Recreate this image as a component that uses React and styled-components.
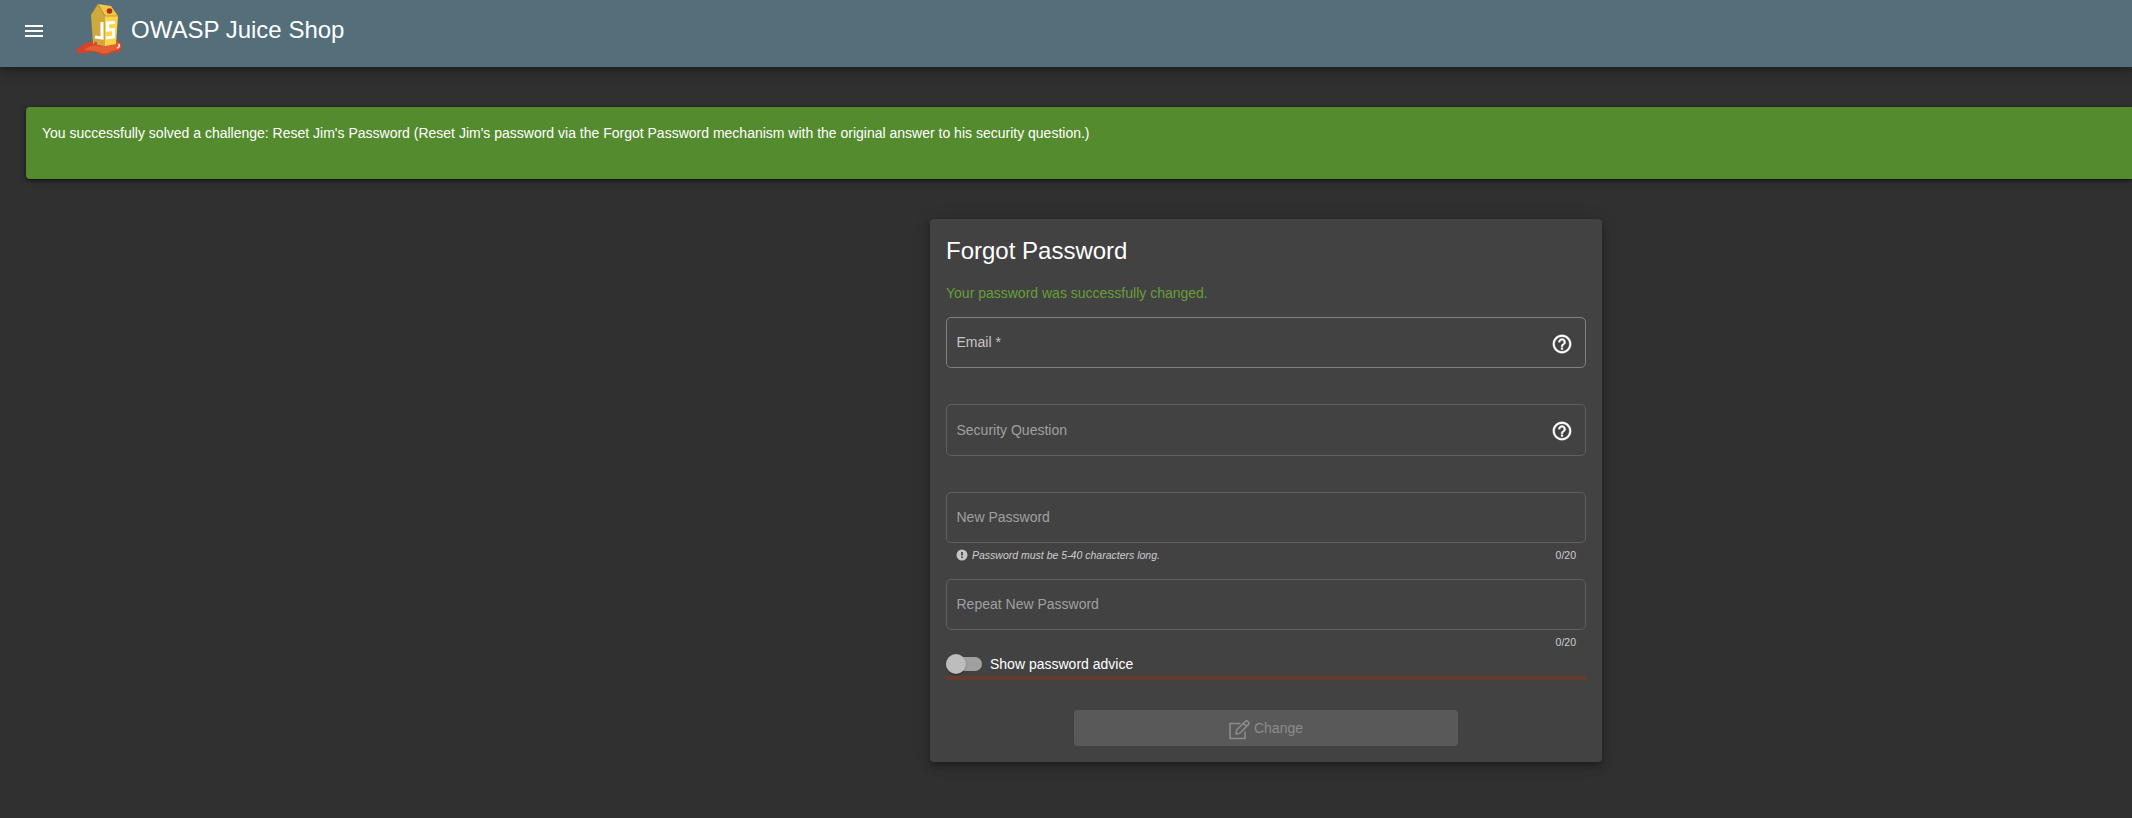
import React from "react";
import styled, { createGlobalStyle } from "styled-components";

const GlobalStyle = createGlobalStyle`
  * { box-sizing: border-box; }
  html { background: #303030; }
  body {
    margin: 0;
    height: 818px;
    overflow: hidden;
    background: #303030;
    color: #fff;
    font-family: "Liberation Sans", Arial, sans-serif;
    font-size: 14px;
  }
`;

const Page = styled.div`
  display: flex;
  flex-direction: column;
  width: 100%;
  height: 818px;
  overflow: hidden;
`;

const Toolbar = styled.header`
  display: flex;
  align-items: flex-start;
  flex: none;
  height: 67px;
  padding-left: 22px;
  background: #546e7a;
  box-shadow: 0 3px 5px -1px rgba(0, 0, 0, 0.2), 0 6px 10px rgba(0, 0, 0, 0.14),
    0 1px 18px rgba(0, 0, 0, 0.12);
`;

const MenuButton = styled.button`
  display: flex;
  margin: 19px 28px 0 0;
  padding: 0;
  border: 0;
  background: none;
  color: #fff;
`;

const Logo = styled.svg`
  display: block;
  flex: none;
  width: 50px;
  height: 56px;
  margin-top: 1px;
`;

const Brand = styled.span`
  margin: 16px 0 0 7px;
  font-size: 24px;
  line-height: 28px;
`;

const Banner = styled.section`
  flex: none;
  height: 72px;
  margin: 40px 0 0 26px;
  padding: 18px 16px;
  border-radius: 4px 0 0 4px;
  background: #558b2f;
  box-shadow: 0 2px 1px -1px rgba(0, 0, 0, 0.2), 0 1px 3px rgba(0, 0, 0, 0.4),
    0 2px 6px rgba(0, 0, 0, 0.3);
  line-height: 16px;
`;

const Card = styled.main`
  display: flex;
  flex-direction: column;
  flex: none;
  width: 672px;
  height: 543px;
  margin: 40px 0 0 930px;
  padding: 16px;
  border-radius: 4px;
  background: #424242;
  box-shadow: 0 3px 5px -1px rgba(0, 0, 0, 0.2), 0 6px 10px rgba(0, 0, 0, 0.14),
    0 1px 18px rgba(0, 0, 0, 0.12);
`;

const Title = styled.h1`
  margin: 2px 0 0;
  font-size: 24px;
  font-weight: 400;
  line-height: 28px;
`;

const Confirmation = styled.p`
  margin: 20px 0 16px;
  color: #689f38;
  line-height: 16px;
`;

const Field = styled.div`
  flex: none;
  height: ${(p) => p.$slot || 87}px;
`;

const Outline = styled.label`
  display: flex;
  align-items: center;
  justify-content: space-between;
  height: ${(p) => p.$height || 51}px;
  padding: 0 12px 0 9.5px;
  border: 1px solid ${(p) => (p.$disabled ? "#5f5f5f" : "#808080")};
  border-radius: 5px;
  color: ${(p) => (p.$disabled ? "#a0a0a0" : "#c6c6c6")};
  line-height: 16px;
`;

const LabelText = styled.span`
  margin-bottom: ${(p) => (p.$low ? 0 : 2)}px;
`;

const HelpIcon = styled.svg`
  display: block;
  width: 22px;
  height: 22px;
  margin-top: 2px;
  fill: #fff;
  stroke: #fff;
  stroke-width: 0.4;
`;

const Subscript = styled.div`
  display: flex;
  align-items: center;
  height: 12px;
  margin-top: 6px;
  padding: 0 10px;
  color: #cecece;
  font-size: 10.5px;
  line-height: 12px;
`;

const Hint = styled.em`
  margin-left: 4px;
`;

const Counter = styled.span`
  margin-left: auto;
`;

const InfoIcon = styled.svg`
  width: 12px;
  height: 12px;
  fill: #c6c6c6;
`;

const ToggleRow = styled.div`
  display: flex;
  align-items: center;
  flex: none;
  height: 20px;
  margin-top: -12px;
`;

const Track = styled.span`
  display: flex;
  align-items: center;
  width: 36px;
  height: 14px;
  margin-right: 8px;
  border-radius: 8px;
  background: #a0a0a0;
`;

const Thumb = styled.span`
  flex: none;
  width: 20px;
  height: 20px;
  border-radius: 50%;
  background: #bdbdbd;
  box-shadow: 0 2px 1px -1px rgba(0, 0, 0, 0.2), 0 1px 1px rgba(0, 0, 0, 0.14),
    0 1px 3px rgba(0, 0, 0, 0.12);
`;

const StrengthBar = styled.div`
  flex: none;
  height: 4px;
  margin-top: 2px;
  background: #673b2c;
`;

const ChangeButton = styled.button`
  display: flex;
  align-items: center;
  justify-content: center;
  gap: 4px;
  width: 384px;
  height: 36px;
  margin: 30px auto 0;
  padding: 0;
  border: 0;
  border-radius: 4px;
  background: #595959;
  color: #8c8c8c;
  font: 14px "Liberation Sans", Arial, sans-serif;
`;

const EditIcon = styled.svg`
  width: 21px;
  height: 20px;
  margin-top: 3px;
`;

const JuiceLogo = () => (
  <Logo viewBox="0 0 50 56">
    <path d="M1 51 C5 46 9 43 15 41 L43 40 C48 41 49 46 46 50 C42 53 38 50 35 53 C31 56 26 53 21 51 C14 50 8 54 1 51Z" fill="#d8412a" />
    <path d="M10 49 C15 45 20 43 27 45 L43 41 C47 42 48 46 45 48 C39 50 37 50 34 52 C29 54 22 49 10 49Z" fill="#e2622f" />
    <path d="M17 14 L24 3 L31 15 L31 45 L19 43Z" fill="#cfa940" />
    <path d="M24 3 L37 5 L44 15 L31 15Z" fill="#f0c843" />
    <path d="M31 15 L44 15 L42 43 L31 45Z" fill="#fbd44c" />
    <path d="M17 14 L24 3 L31 15 M31 15 L44 15" fill="none" stroke="#b58d2c" strokeWidth="0.8" />
    <circle cx="35.5" cy="10" r="2.8" fill="#b52b16" />
    <path d="M28 21 V37 L21 36" fill="none" stroke="#fff" strokeWidth="3.1" />
    <path d="M41 21.500 L33.500 22 V29 L39.500 28.500 V36 L32 37" fill="none" stroke="#fff" strokeWidth="3.1" />
    <path d="M20 42 q2 -3 3 0 v2 h-3Z" fill="#d8472a" />
    <path d="M43 47 q3 -1 2 -4" fill="none" stroke="#ffe7dc" strokeWidth="1.6" />
  </Logo>
);

const Help = () => (
  <HelpIcon viewBox="0 0 24 24">
    <path d="M11 18h2v-2h-2v2zm1-16C6.48 2 2 6.48 2 12s4.48 10 10 10 10-4.48 10-10S17.52 2 12 2zm0 18c-4.41 0-8-3.59-8-8s3.59-8 8-8 8 3.59 8 8-3.59 8-8 8zm0-14c-2.21 0-4 1.79-4 4h2c0-1.1.9-2 2-2s2 .9 2 2c0 2-3 1.75-3 5h2c0-2.25 3-2.5 3-5 0-2.21-1.79-4-4-4z" />
  </HelpIcon>
);

export default function App() {
  return (
    <Page>
      <GlobalStyle />
      <Toolbar>
        <MenuButton aria-label="Open menu">
          <svg width="24" height="24" viewBox="0 0 24 24" fill="#fff">
            <path d="M3 18h18v-2H3v2zm0-5h18v-2H3v2zm0-7v2h18V6H3z" />
          </svg>
        </MenuButton>
        <JuiceLogo />
        <Brand>OWASP Juice Shop</Brand>
      </Toolbar>
      <Banner>
        You successfully solved a challenge: Reset Jim's Password (Reset Jim's password via the
        Forgot Password mechanism with the original answer to his security question.)
      </Banner>
      <Card>
        <Title>Forgot Password</Title>
        <Confirmation>Your password was successfully changed.</Confirmation>
        <Field>
          <Outline>
            <LabelText>Email *</LabelText>
            <Help />
          </Outline>
        </Field>
        <Field $slot={88}>
          <Outline $disabled $height={52}>
            <LabelText $low>Security Question</LabelText>
            <Help />
          </Outline>
        </Field>
        <Field>
          <Outline $disabled>
            <LabelText>New Password</LabelText>
          </Outline>
          <Subscript>
            <InfoIcon viewBox="0 0 24 24">
              <path d="M12 1a11 11 0 1 0 0 22 11 11 0 0 0 0-22zm1.700 17h-3.400v-3h3.400zm0-5h-3.400V6h3.400z" />
            </InfoIcon>
            <Hint>Password must be 5-40 characters long.</Hint>
            <Counter>0/20</Counter>
          </Subscript>
        </Field>
        <Field>
          <Outline $disabled>
            <LabelText>Repeat New Password</LabelText>
          </Outline>
          <Subscript>
            <Counter>0/20</Counter>
          </Subscript>
        </Field>
        <ToggleRow>
          <Track>
            <Thumb />
          </Track>
          Show password advice
        </ToggleRow>
        <StrengthBar />
        <ChangeButton disabled>
          <EditIcon viewBox="0 0 21 20" fill="none" stroke="#8c8c8c" strokeWidth="1.6" strokeLinejoin="round">
            <path d="M11.500 3.500H1v15h15v-7" />
            <path d="M7 14l.6-4L16.400 1.300a1.500 1.500 0 0 1 2.100 0l1 1a1.500 1.500 0 0 1 0 2.100L10.800 13.200zM14.500 3.200l3.100 3.100" />
          </EditIcon>
          Change
        </ChangeButton>
      </Card>
    </Page>
  );
}
